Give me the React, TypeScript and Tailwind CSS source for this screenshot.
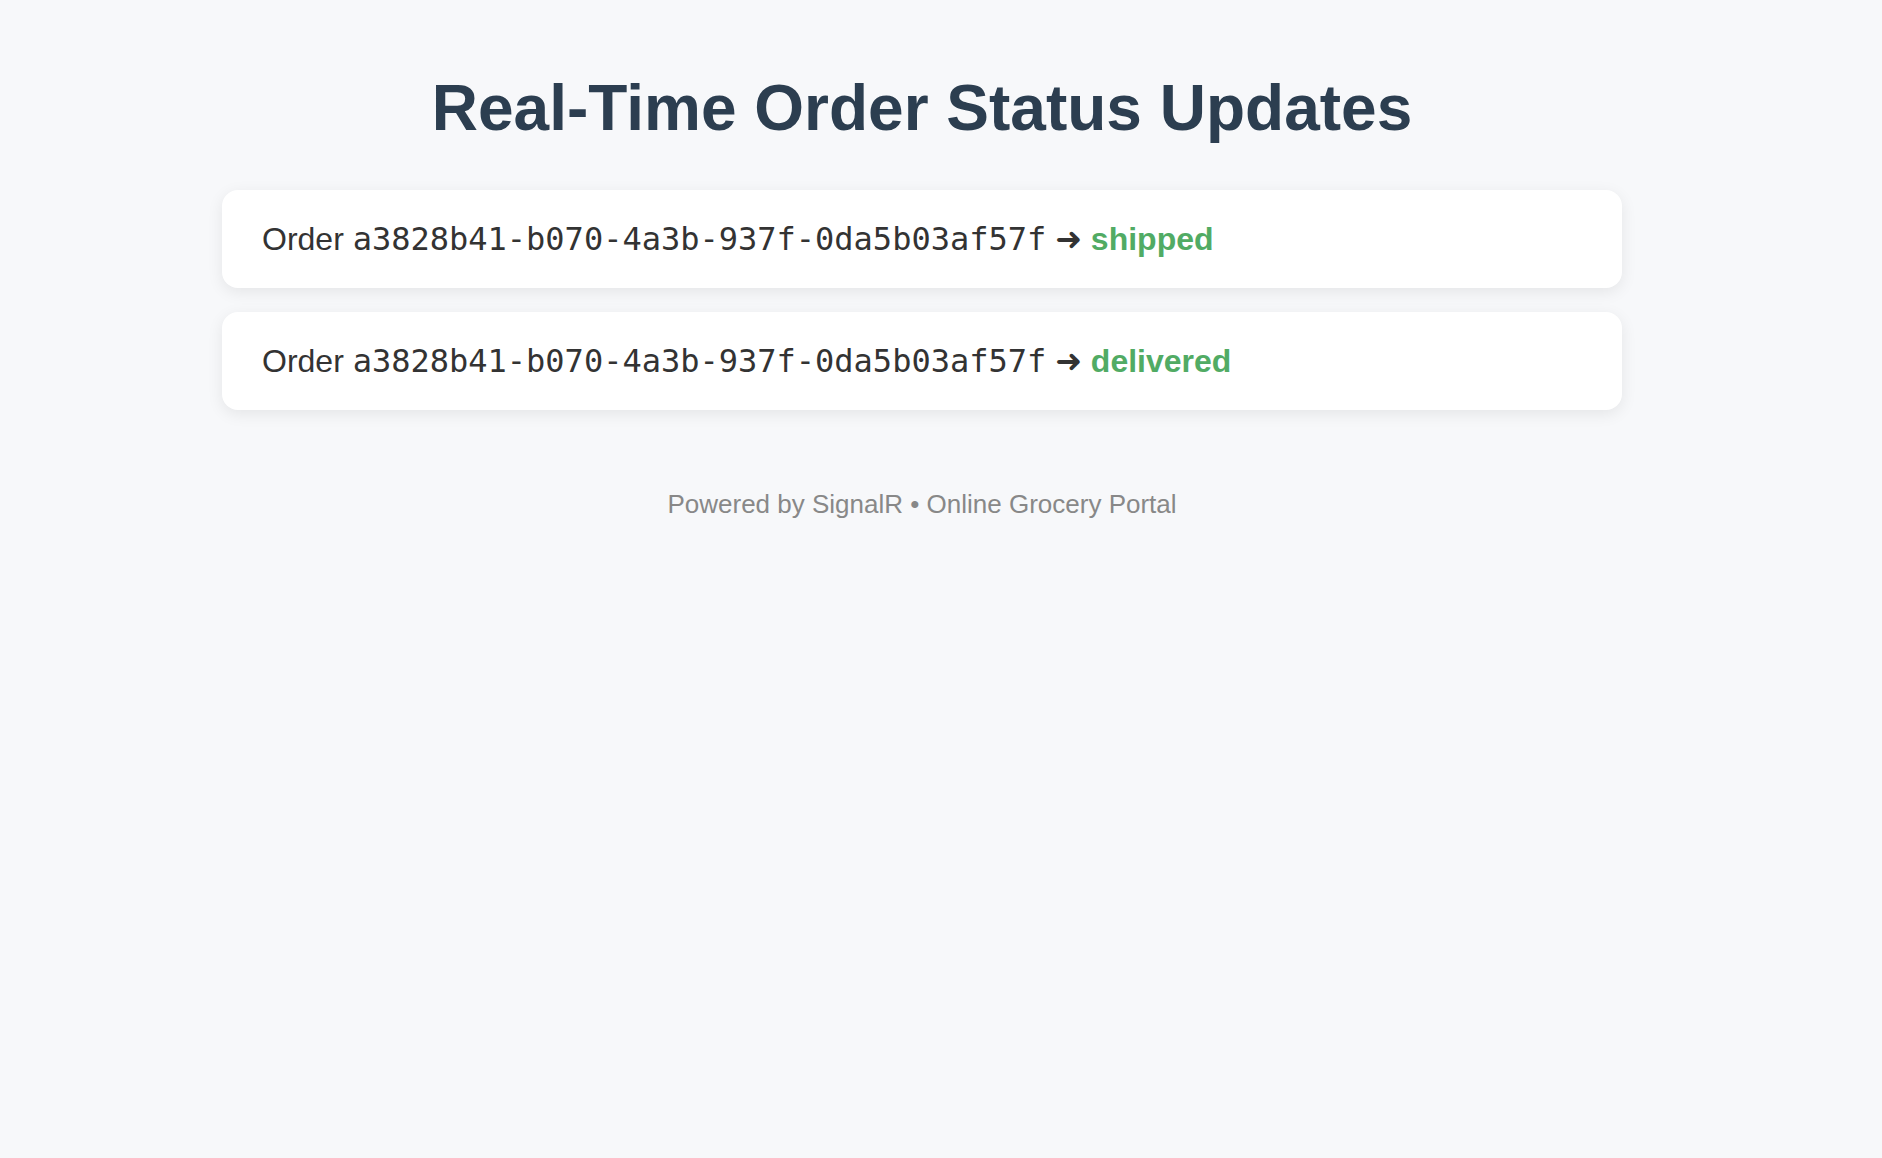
import React from "react";

type Update = { id: string; status: string };

const updates: Update[] = [
  { id: "a3828b41-b070-4a3b-937f-0da5b03af57f", status: "shipped" },
  { id: "a3828b41-b070-4a3b-937f-0da5b03af57f", status: "delivered" },
];

export default function App() {
  return (
    <div className="min-h-screen bg-[#f7f8fa] pr-[38px] font-['Liberation_Sans',Arial,sans-serif]">
      <div className="flex flex-col items-center pt-[72px]">
        {/* 标题 */}
        <h1 className="text-[64px] leading-[1.15] font-bold text-[#2c3e50]">
          Real-Time Order Status Updates
        </h1>

        {/* 订单更新列表 */}
        <div className="mt-[44px] flex w-[1400px] flex-col gap-[24px]">
          {updates.map((u, i) => (
            <div
              key={i}
              className="rounded-[16px] bg-white px-[40px] py-[30px] text-[32px] leading-[38px] text-[#333] shadow-[0_4px_16px_rgba(0,0,0,0.08)]"
            >
              Order{" "}
              <span className="font-['DejaVu_Sans_Mono',monospace]">{u.id}</span>{" "}
              <span className="font-bold font-['DejaVu_Sans',sans-serif]">➜</span>{" "}
              <span className="font-bold text-[#51ab64]">{u.status}</span>
            </div>
          ))}
        </div>

        <p className="mt-[80px] text-[26px] leading-[1.15] text-[#888]">
          Powered by SignalR • Online Grocery Portal
        </p>
      </div>
    </div>
  );
}
